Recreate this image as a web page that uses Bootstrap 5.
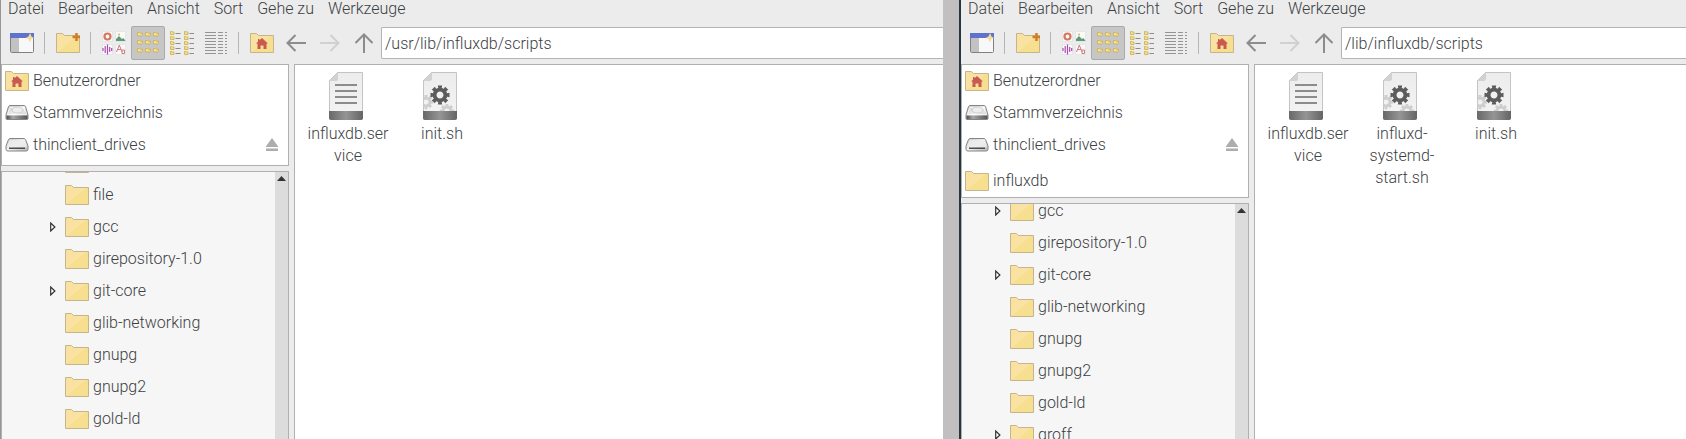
<!DOCTYPE html>
<html lang="de">
<head>
<meta charset="utf-8">
<meta name="viewport" content="width=device-width, initial-scale=1">
<title>Dateimanager</title>
<link href="https://cdn.jsdelivr.net/npm/bootstrap@5.3.0/dist/css/bootstrap.min.css" rel="stylesheet">
<style>
  body { font-family: Roboto, "Liberation Sans", sans-serif; font-weight: 300; font-size: 16px; color: #3c4144; background: #c1bfbf; }
  svg { display: block; flex: none; }
  button, input { font: inherit; color: inherit; }
  .fm { background: #ececec; min-width: 0; }
  .fm-left { flex: 942 1 0; border-left: 1px solid #979797; }
  .fm-right { flex: 725 1 0; border-left: 2px solid #25383f; }
  .desk-gap { flex: 0 0 16px; }
  .menu-bar { flex: none; padding: 0 7px; gap: 14px; height: 26px; }
  .menu-bar button { line-height: 17px; }
  .plain-btn { border: 0; background: none; padding: 0; }
  .tools { flex: none; padding-left: 4px; height: 34px; }
  .tool { width: 34px; height: 34px; display: flex; align-items: center; justify-content: center; border: 1px solid transparent; background: none; padding: 0; flex: none; }
  .tool.active { background: #c6c6c6; border-color: #aaa; border-radius: 2px; }
  .tool-sep { flex: none; width: 1px; height: 22px; margin: 0 6px 0 5px; background: #b6b6b6; }
  .path-box { height: 32px; border: 1px solid #b4b4b4; border-right: 0; border-radius: 2px 0 0 2px; padding: 0 3px; background: #fff; min-width: 0; outline: 0; }
  .fm-body { flex: 1 1 0; padding-top: 4px; gap: 5px; }
  .side { flex: 0 0 288px; gap: 5px; }
  .panel { border: 1px solid #b0b0b0; background: #fff; }
  .entry { height: 32px; color: inherit; text-decoration: none; gap: 4px; }
  .places { flex: none; padding: 0 9px 4px 3px; }
  .places.has-mark { padding-bottom: 0; }
  .has-mark .mark-row { margin-top: 4px; }
  .tree-panel { flex: 1 1 0; background: #f6f6f6; border-bottom: 0; }
  .tree { padding-left: 48px; }
  .fm-right .tree { padding-left: 33px; }
  .scrolled-a { margin-top: -25px; }
  .scrolled-b { margin-top: -9px; }
  .knob { width: 15px; flex: none; }
  .scroll-rail { flex: 0 0 13px; background: #dcdcdc; padding: 4px 2px; }
  .files { border-right: 0; border-bottom: 0; padding: 7px 6px; min-width: 0; }
  .file-item { width: 94px; color: inherit; text-decoration: none; line-height: 22px; }
  .file-name { width: 84px; text-align: center; overflow-wrap: anywhere; margin-top: 3px; }
</style>
</head>
<body>
<svg width="0" height="0" class="position-absolute" aria-hidden="true">
  <defs>
    <linearGradient id="gFold" x1="0" y1="0" x2="1" y2="1"><stop offset="0" stop-color="#f9e0a0"/><stop offset=".5" stop-color="#fae3a2"/><stop offset=".52" stop-color="#f7df90"/><stop offset="1" stop-color="#f7df90"/></linearGradient>
    <linearGradient id="gBand"><stop offset="0" stop-color="#686868"/><stop offset=".5" stop-color="#959595"/><stop offset="1" stop-color="#646464"/></linearGradient>
    <linearGradient id="gPage" x1="0" y1="0" x2="0" y2="1"><stop offset="0" stop-color="#ececec"/><stop offset="1" stop-color="#f4f4f4"/></linearGradient>
    <linearGradient id="gDisk" x1="0" y1="0" x2="1" y2="1"><stop offset="0" stop-color="#c4c4c4"/><stop offset=".5" stop-color="#f2f2f2"/><stop offset="1" stop-color="#b4b4b4"/></linearGradient>
    <linearGradient id="gEdge"><stop offset="0" stop-color="#4a4a4a"/><stop offset=".3" stop-color="#a8a8a8"/><stop offset="1" stop-color="#555"/></linearGradient>
    <symbol id="folder" viewBox="0 0 24 20"><path d="M.5 19.500V.5H6.500L8.500 2.500H23.500V19.500Z" fill="url(#gFold)" stroke="#c5b58a"/></symbol>
    <symbol id="home" viewBox="0 0 24 20"><use href="#folder"/><path d="M12 5l6 5.500h-1.500V16h-3v-3.500h-3V16h-3v-5.500H6l2-2V6h1.500v1.200z" fill="#c95a50"/></symbol>
    <symbol id="folder-new" viewBox="0 0 24 20"><use href="#folder"/><path d="M20.500 0v8M16.500 4h8" stroke="#d27c28" stroke-width="2.500"/></symbol>
    <symbol id="win-new" viewBox="0 0 24 20"><rect x=".5" y=".5" width="23" height="19" rx="1" fill="#f8f8fa" stroke="#808080"/><path d="M1 5h8v14H1z" fill="#c2c2c2"/><path d="M0 0h24v5H0z" fill="#5f72cc"/><path d="M20 0l1.500 3.500L24 5l-2.500 1L20 9.500 18.500 6 15.500 5l3-1.500z" fill="#f5dc9a"/></symbol>
    <symbol id="view-thumb" viewBox="0 0 24 24"><g fill="#fafafa" stroke="#d8d8d8" stroke-width=".5"><path d="M.5.5h10v10H.5zM13.500.5h10v10h-10zM.5 13.500h10v10H.5zM13.500 13.500h10v10h-10z"/></g><circle cx="5.500" cy="5.500" r="3" fill="none" stroke="#d9775a" stroke-width="2.200"/><path d="M14 10V8l3-3 3 3 1.500-1 2 3z" fill="#5c9c7c"/><circle cx="17" cy="3.500" r="1" fill="#d9b45a"/><path d="M1 17v3M3.200 15v7M5.500 13.500v10M7.700 16v5M9.700 17v3" stroke="#b04ab4" stroke-width="1.200"/><path d="M14.500 21l2.800-7 2.700 7M15.500 18.500h3.500M20 19h2.500v3.500H20z" fill="none" stroke="#d27a80"/></symbol>
    <g id="mini"><path d="M.5 4V.5h2l.7.7h2V4z" fill="#f5df8c" stroke="#cfb257" stroke-width=".9"/></g>
    <symbol id="view-icons" viewBox="0 0 24 24"><use href="#mini" x="1" y="1"/><use href="#mini" x="9" y="1"/><use href="#mini" x="17" y="1"/><use href="#mini" x="1" y="9"/><use href="#mini" x="9" y="9"/><use href="#mini" x="17" y="9"/><use href="#mini" x="1" y="17"/><use href="#mini" x="9" y="17"/><use href="#mini" x="17" y="17"/></symbol>
    <g id="mini-row"><path d="M.5 3.500v-3h1.500l.5.500h1.500v2.500z" fill="#f5df8c" stroke="#cfb257" stroke-width=".9"/><path d="M5.500 2.500h5" stroke="#8c8c8c"/></g>
    <symbol id="view-compact" viewBox="0 0 24 24"><use href="#mini-row"/><use href="#mini-row" y="5"/><use href="#mini-row" y="10"/><use href="#mini-row" y="15"/><use href="#mini-row" y="20"/><use href="#mini-row" x="14"/><use href="#mini-row" x="14" y="5"/><use href="#mini-row" x="14" y="10"/><use href="#mini-row" x="14" y="15"/><use href="#mini-row" x="14" y="20"/></symbol>
    <symbol id="view-list" viewBox="0 0 24 24"><path d="M1 1.500h11M1 4.500h11M1 7.500h11M1 10.500h11M1 13.500h11M1 16.500h11M1 19.500h11M1 22.500h11M14 1.500h5M14 4.500h5M14 7.500h5M14 10.500h5M14 13.500h5M14 16.500h5M14 19.500h5M14 22.500h5M21 1.500h2M21 4.500h2M21 7.500h2M21 10.500h2M21 13.500h2M21 16.500h2M21 19.500h2M21 22.500h2" stroke="#949494"/></symbol>
    <symbol id="arrow" viewBox="0 0 20 18"><path d="M20 9H2M9.500 1L1.500 9l8 8" fill="none" stroke="currentColor" stroke-width="2"/></symbol>
    <symbol id="arrow-up" viewBox="0 0 20 20"><path d="M10 20V2M1.500 10L10 1.500l8.500 8.500" fill="none" stroke="currentColor" stroke-width="2"/></symbol>
    <symbol id="disk" viewBox="0 0 24 20"><path d="M5 2.500h14q1 0 1.500 1L23 12v3.500q0 1-1 1H2q-1 0-1-1V12L3.500 3.500q.5-1 1.500-1z" fill="url(#gDisk)" stroke="#858585"/><path d="M2.500 11.500L5 4.500h14l2.500 7z" fill="none" stroke="#fff" opacity=".7"/><ellipse cx="12.500" cy="7" rx="5.500" ry="3" fill="#eee" stroke="#bbb" stroke-width=".6"/><path d="M1.500 12.500h21v3.500h-21z" fill="url(#gEdge)"/></symbol>
    <symbol id="drive" viewBox="0 0 24 20"><path d="M5 3.500h14q1 0 1.500 1L23 11v3.500q0 1.500-2 1.500H3q-2 0-2-1.500V11l2.500-6.500q.5-1 1.500-1z" fill="url(#gDisk)" stroke="#858585"/><path d="M2 11l2.500-6h15L22 11v1H2z" fill="#ececec" opacity=".8"/><path d="M4 12.500h16v1.500H4z" fill="#4d4d4d"/></symbol>
    <symbol id="eject" viewBox="0 0 14 14"><path d="M7 0l6.500 9H.5zM1 10.500h12V13H1z" fill="#adadad"/></symbol>
    <symbol id="tri" viewBox="0 0 6 10"><path d="M.7 1v8L4.900 5z" fill="#fff" stroke="#333" stroke-width="1.200"/></symbol>
    <g id="page"><path d="M5.500 8.500l8-8H38.500V47H5.500z" fill="url(#gPage)" stroke="#c4c4c4"/><path d="M5.500 8.500l8-8v6.500q0 1.500-1.500 1.500z" fill="#d2d2d2" stroke="#c8c8c8" stroke-width=".6"/></g>
    <path id="band" d="M5 39h34v7q0 2-2 2H7q-2 0-2-2z" fill="url(#gBand)"/>
    <g id="gear"><circle r="5.400" fill="none" stroke="currentColor" stroke-width="3.800"/><path d="M-2.200-9.500h4.400L1.500-6h-3zM-2.200 9.500h4.400L1.500 6h-3zM-9.500-2.200v4.400L-6 1.500v-3zM9.500-2.200v4.400L6 1.500v-3z" fill="currentColor"/><path transform="rotate(45)" d="M-2.200-9.500h4.400L1.500-6h-3zM-2.200 9.500h4.400L1.500 6h-3zM-9.500-2.200v4.400L-6 1.500v-3zM9.500-2.200v4.400L6 1.500v-3z" fill="currentColor"/></g>
    <clipPath id="pageClip"><path d="M5.500 1h33v38h-33z"/></clipPath>
    <symbol id="doc-text" viewBox="0 0 48 48"><use href="#page"/><path d="M11 13h22M11 19h22M11 25h22M11 31h22" stroke="#8c8c8c" stroke-width="2"/><use href="#band"/></symbol>
    <symbol id="doc-script" viewBox="0 0 48 48"><use href="#page"/><g clip-path="url(#pageClip)"><g color="#cecece"><use href="#gear" transform="translate(8 30) scale(.75)"/><use href="#gear" transform="translate(29 39) scale(.75)"/></g><g color="#5c5c5c"><use href="#gear" x="22" y="23"/></g></g><use href="#band"/></symbol>
  </defs>
</svg>

<div class="d-flex vh-100 overflow-hidden">

  <section class="fm fm-left d-flex flex-column overflow-hidden" aria-label="/usr/lib/influxdb/scripts">
    <nav class="menu-bar d-flex align-items-start text-nowrap">
      <button class="plain-btn">Datei</button><button class="plain-btn">Bearbeiten</button><button class="plain-btn">Ansicht</button><button class="plain-btn">Sort</button><button class="plain-btn">Gehe zu</button><button class="plain-btn">Werkzeuge</button>
    </nav>
    <div class="tools d-flex align-items-center" role="toolbar">
      <button class="tool" aria-label="Neues Fenster"><svg width="24" height="20"><use href="#win-new"/></svg></button>
      <span class="tool-sep"></span>
      <button class="tool" aria-label="Neuer Ordner"><svg width="24" height="20" overflow="visible"><use href="#folder-new"/></svg></button>
      <span class="tool-sep"></span>
      <button class="tool" aria-label="Vorschau"><svg width="24" height="24"><use href="#view-thumb"/></svg></button>
      <button class="tool active" aria-label="Symbole" aria-pressed="true"><svg width="24" height="24"><use href="#view-icons"/></svg></button>
      <button class="tool" aria-label="Kompakt"><svg width="24" height="24"><use href="#view-compact"/></svg></button>
      <button class="tool" aria-label="Liste"><svg width="24" height="24"><use href="#view-list"/></svg></button>
      <span class="tool-sep"></span>
      <button class="tool" aria-label="Benutzerordner"><svg width="24" height="20"><use href="#home"/></svg></button>
      <button class="tool" aria-label="Zurück" style="color:#8c8c8c"><svg width="20" height="18"><use href="#arrow"/></svg></button>
      <button class="tool" aria-label="Vor" style="color:#d0d0d0"><svg width="20" height="18" viewBox="0 0 20 18"><use href="#arrow" width="20" height="18" transform="matrix(-1 0 0 1 20 0)"/></svg></button>
      <button class="tool" aria-label="Nach oben" style="color:#8c8c8c"><svg width="20" height="20"><use href="#arrow-up"/></svg></button>
      <input class="path-box flex-grow-1" type="text" aria-label="Pfad" value="/usr/lib/influxdb/scripts">
    </div>
    <div class="fm-body d-flex overflow-hidden">
      <aside class="side d-flex flex-column overflow-hidden">
        <div class="panel places">
          <a href="#" class="entry d-flex align-items-center"><svg width="24" height="20"><use href="#home"/></svg>Benutzerordner</a>
          <a href="#" class="entry d-flex align-items-center"><svg width="24" height="20"><use href="#disk"/></svg>Stammverzeichnis</a>
          <div class="d-flex align-items-center"><a href="#" class="entry d-flex align-items-center flex-grow-1"><svg width="24" height="20"><use href="#drive"/></svg>thinclient_drives</a><button class="plain-btn" aria-label="Auswerfen"><svg width="14" height="14"><use href="#eject"/></svg></button></div>
        </div>
        <div class="panel tree-panel d-flex overflow-hidden">
          <ul class="tree list-unstyled mb-0 scrolled-a flex-grow-1">
            <li class="d-flex align-items-center" aria-hidden="true"><span class="knob"></span><span class="entry d-flex align-items-center"><svg width="24" height="20"><use href="#folder"/></svg></span></li>
            <li class="d-flex align-items-center"><span class="knob"></span><a href="#" class="entry d-flex align-items-center"><svg width="24" height="20"><use href="#folder"/></svg>file</a></li>
            <li class="d-flex align-items-center"><button class="plain-btn knob" aria-label="gcc öffnen"><svg width="6" height="10"><use href="#tri"/></svg></button><a href="#" class="entry d-flex align-items-center"><svg width="24" height="20"><use href="#folder"/></svg>gcc</a></li>
            <li class="d-flex align-items-center"><span class="knob"></span><a href="#" class="entry d-flex align-items-center"><svg width="24" height="20"><use href="#folder"/></svg>girepository-1.0</a></li>
            <li class="d-flex align-items-center"><button class="plain-btn knob" aria-label="git-core öffnen"><svg width="6" height="10"><use href="#tri"/></svg></button><a href="#" class="entry d-flex align-items-center"><svg width="24" height="20"><use href="#folder"/></svg>git-core</a></li>
            <li class="d-flex align-items-center"><span class="knob"></span><a href="#" class="entry d-flex align-items-center"><svg width="24" height="20"><use href="#folder"/></svg>glib-networking</a></li>
            <li class="d-flex align-items-center"><span class="knob"></span><a href="#" class="entry d-flex align-items-center"><svg width="24" height="20"><use href="#folder"/></svg>gnupg</a></li>
            <li class="d-flex align-items-center"><span class="knob"></span><a href="#" class="entry d-flex align-items-center"><svg width="24" height="20"><use href="#folder"/></svg>gnupg2</a></li>
            <li class="d-flex align-items-center"><span class="knob"></span><a href="#" class="entry d-flex align-items-center"><svg width="24" height="20"><use href="#folder"/></svg>gold-ld</a></li>
          </ul>
          <div class="scroll-rail"><svg width="9" height="5"><path d="M0 5L4.500 0 9 5z" fill="#333"/></svg></div>
        </div>
      </aside>
      <main class="panel files d-flex flex-grow-1 align-items-start">
        <a href="#" class="file-item d-flex flex-column align-items-center"><svg width="48" height="48"><use href="#doc-text"/></svg><span class="file-name">influxdb.service</span></a>
        <a href="#" class="file-item d-flex flex-column align-items-center"><svg width="48" height="48"><use href="#doc-script"/></svg><span class="file-name">init.sh</span></a>
      </main>
    </div>
  </section>

  <div class="desk-gap"></div>

  <section class="fm fm-right d-flex flex-column overflow-hidden" aria-label="/lib/influxdb/scripts">
    <nav class="menu-bar d-flex align-items-start text-nowrap">
      <button class="plain-btn">Datei</button><button class="plain-btn">Bearbeiten</button><button class="plain-btn">Ansicht</button><button class="plain-btn">Sort</button><button class="plain-btn">Gehe zu</button><button class="plain-btn">Werkzeuge</button>
    </nav>
    <div class="tools d-flex align-items-center" role="toolbar">
      <button class="tool" aria-label="Neues Fenster"><svg width="24" height="20"><use href="#win-new"/></svg></button>
      <span class="tool-sep"></span>
      <button class="tool" aria-label="Neuer Ordner"><svg width="24" height="20" overflow="visible"><use href="#folder-new"/></svg></button>
      <span class="tool-sep"></span>
      <button class="tool" aria-label="Vorschau"><svg width="24" height="24"><use href="#view-thumb"/></svg></button>
      <button class="tool active" aria-label="Symbole" aria-pressed="true"><svg width="24" height="24"><use href="#view-icons"/></svg></button>
      <button class="tool" aria-label="Kompakt"><svg width="24" height="24"><use href="#view-compact"/></svg></button>
      <button class="tool" aria-label="Liste"><svg width="24" height="24"><use href="#view-list"/></svg></button>
      <span class="tool-sep"></span>
      <button class="tool" aria-label="Benutzerordner"><svg width="24" height="20"><use href="#home"/></svg></button>
      <button class="tool" aria-label="Zurück" style="color:#8c8c8c"><svg width="20" height="18"><use href="#arrow"/></svg></button>
      <button class="tool" aria-label="Vor" style="color:#d0d0d0"><svg width="20" height="18" viewBox="0 0 20 18"><use href="#arrow" width="20" height="18" transform="matrix(-1 0 0 1 20 0)"/></svg></button>
      <button class="tool" aria-label="Nach oben" style="color:#8c8c8c"><svg width="20" height="20"><use href="#arrow-up"/></svg></button>
      <input class="path-box flex-grow-1" type="text" aria-label="Pfad" value="/lib/influxdb/scripts">
    </div>
    <div class="fm-body d-flex overflow-hidden">
      <aside class="side d-flex flex-column overflow-hidden">
        <div class="panel places has-mark">
          <a href="#" class="entry d-flex align-items-center"><svg width="24" height="20"><use href="#home"/></svg>Benutzerordner</a>
          <a href="#" class="entry d-flex align-items-center"><svg width="24" height="20"><use href="#disk"/></svg>Stammverzeichnis</a>
          <div class="d-flex align-items-center"><a href="#" class="entry d-flex align-items-center flex-grow-1"><svg width="24" height="20"><use href="#drive"/></svg>thinclient_drives</a><button class="plain-btn" aria-label="Auswerfen"><svg width="14" height="14"><use href="#eject"/></svg></button></div>
          <a href="#" class="entry mark-row d-flex align-items-center"><svg width="24" height="20"><use href="#folder"/></svg>influxdb</a>
        </div>
        <div class="panel tree-panel d-flex overflow-hidden">
          <ul class="tree list-unstyled mb-0 scrolled-b flex-grow-1">
            <li class="d-flex align-items-center"><button class="plain-btn knob" aria-label="gcc öffnen"><svg width="6" height="10"><use href="#tri"/></svg></button><a href="#" class="entry d-flex align-items-center"><svg width="24" height="20"><use href="#folder"/></svg>gcc</a></li>
            <li class="d-flex align-items-center"><span class="knob"></span><a href="#" class="entry d-flex align-items-center"><svg width="24" height="20"><use href="#folder"/></svg>girepository-1.0</a></li>
            <li class="d-flex align-items-center"><button class="plain-btn knob" aria-label="git-core öffnen"><svg width="6" height="10"><use href="#tri"/></svg></button><a href="#" class="entry d-flex align-items-center"><svg width="24" height="20"><use href="#folder"/></svg>git-core</a></li>
            <li class="d-flex align-items-center"><span class="knob"></span><a href="#" class="entry d-flex align-items-center"><svg width="24" height="20"><use href="#folder"/></svg>glib-networking</a></li>
            <li class="d-flex align-items-center"><span class="knob"></span><a href="#" class="entry d-flex align-items-center"><svg width="24" height="20"><use href="#folder"/></svg>gnupg</a></li>
            <li class="d-flex align-items-center"><span class="knob"></span><a href="#" class="entry d-flex align-items-center"><svg width="24" height="20"><use href="#folder"/></svg>gnupg2</a></li>
            <li class="d-flex align-items-center"><span class="knob"></span><a href="#" class="entry d-flex align-items-center"><svg width="24" height="20"><use href="#folder"/></svg>gold-ld</a></li>
            <li class="d-flex align-items-center"><button class="plain-btn knob" aria-label="groff öffnen"><svg width="6" height="10"><use href="#tri"/></svg></button><a href="#" class="entry d-flex align-items-center"><svg width="24" height="20"><use href="#folder"/></svg>groff</a></li>
          </ul>
          <div class="scroll-rail"><svg width="9" height="5"><path d="M0 5L4.500 0 9 5z" fill="#333"/></svg></div>
        </div>
      </aside>
      <main class="panel files d-flex flex-grow-1 align-items-start">
        <a href="#" class="file-item d-flex flex-column align-items-center"><svg width="48" height="48"><use href="#doc-text"/></svg><span class="file-name">influxdb.service</span></a>
        <a href="#" class="file-item d-flex flex-column align-items-center"><svg width="48" height="48"><use href="#doc-script"/></svg><span class="file-name">influxd-systemd-start.sh</span></a>
        <a href="#" class="file-item d-flex flex-column align-items-center"><svg width="48" height="48"><use href="#doc-script"/></svg><span class="file-name">init.sh</span></a>
      </main>
    </div>
  </section>

</div>
<script src="https://cdn.jsdelivr.net/npm/bootstrap@5.3.0/dist/js/bootstrap.bundle.min.js"></script>
</body>
</html>
